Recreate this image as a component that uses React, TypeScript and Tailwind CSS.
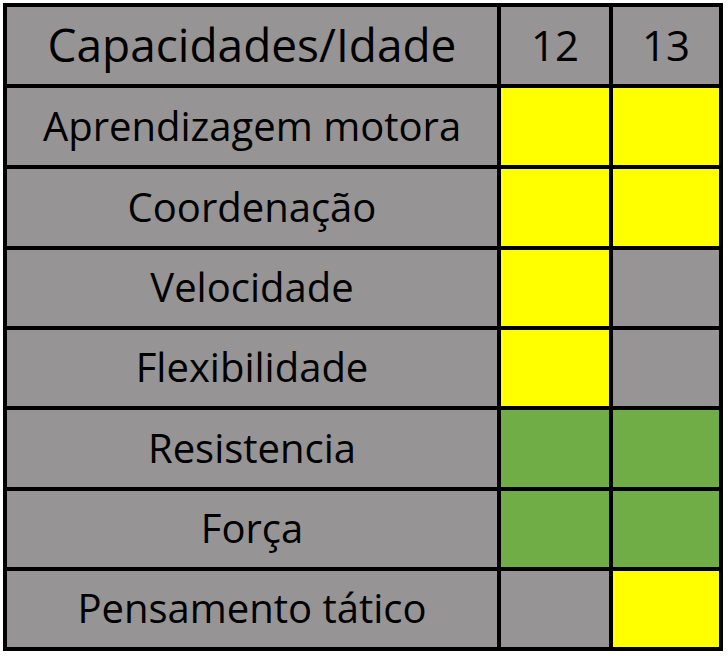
const GRAY = "bg-[#969494]";
const YELLOW = "bg-[#ffff00]";
const GREEN = "bg-[#70ad47]";

type Row = { label: string; a: string; b: string };

const rows: Row[] = [
  { label: "Aprendizagem motora", a: YELLOW, b: YELLOW },
  { label: "Coordenação", a: YELLOW, b: YELLOW },
  { label: "Velocidade", a: YELLOW, b: GRAY },
  { label: "Flexibilidade", a: YELLOW, b: GRAY },
  { label: "Resistencia", a: GREEN, b: GREEN },
  { label: "Força", a: GREEN, b: GREEN },
  { label: "Pensamento tático", a: GRAY, b: YELLOW },
];

export default function App() {
  return (
    <div className="w-[728px] h-[656px] bg-white pl-[3px] pt-[3px] font-['Open_Sans',sans-serif] text-black">
      <div className="inline-grid grid-cols-[490px_108px_106px] grid-rows-[77px_77px_77px_76px_76px_77px_76px_76px] gap-[4px] p-[4px] bg-black">
        <div className={`${GRAY} flex items-center justify-center pb-[2px] text-[46px]`}>
          Capacidades/Idade
        </div>
        <div className={`${GRAY} flex items-center justify-center pb-[2px] text-[42px]`}>12</div>
        <div className={`${GRAY} flex items-center justify-center pb-[2px] text-[42px]`}>13</div>
        {rows.map((r) => (
          <>
            <div key={r.label} className={`${GRAY} flex items-center justify-center pb-[2px] text-[40px]`}>
              {r.label}
            </div>
            <div className={r.a} />
            <div className={r.b} />
          </>
        ))}
      </div>
    </div>
  );
}
